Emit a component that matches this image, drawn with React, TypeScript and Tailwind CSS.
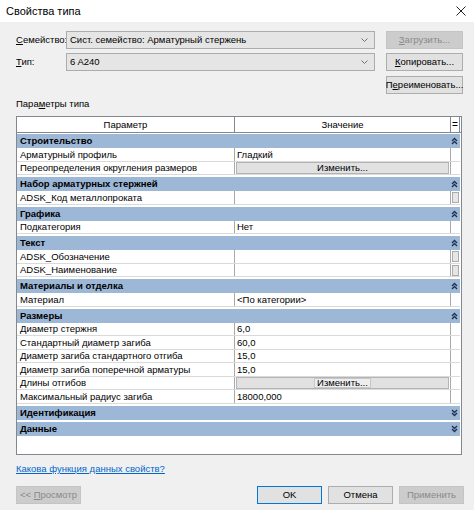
import React from 'react';

type Row =
  | { kind: 'group'; title: string; open: boolean }
  | { kind: 'data'; name: string; value?: string; button?: boolean; focus?: boolean; shared?: boolean };

const rows: Row[] = [
  { kind: 'group', title: 'Строительство', open: true },
  { kind: 'data', name: 'Арматурный профиль', value: 'Гладкий' },
  { kind: 'data', name: 'Переопределения округления размеров', button: true },
  { kind: 'group', title: 'Набор арматурных стержней', open: true },
  { kind: 'data', name: 'ADSK_Код металлопроката', shared: true },
  { kind: 'group', title: 'Графика', open: true },
  { kind: 'data', name: 'Подкатегория', value: 'Нет' },
  { kind: 'group', title: 'Текст', open: true },
  { kind: 'data', name: 'ADSK_Обозначение', shared: true },
  { kind: 'data', name: 'ADSK_Наименование', shared: true },
  { kind: 'group', title: 'Материалы и отделка', open: true },
  { kind: 'data', name: 'Материал', value: '<По категории>' },
  { kind: 'group', title: 'Размеры', open: true },
  { kind: 'data', name: 'Диаметр стержня', value: '6,0' },
  { kind: 'data', name: 'Стандартный диаметр загиба', value: '60,0' },
  { kind: 'data', name: 'Диаметр загиба стандартного отгиба', value: '15,0' },
  { kind: 'data', name: 'Диаметр загиба поперечной арматуры', value: '15,0' },
  { kind: 'data', name: 'Длины отгибов', button: true, focus: true },
  { kind: 'data', name: 'Максимальный радиус загиба', value: '18000,000' },
  { kind: 'group', title: 'Идентификация', open: false },
  { kind: 'group', title: 'Данные', open: false },
];

function Chevrons({ up }: { up: boolean }) {
  return (
    <svg width="7" height="8" viewBox="0 0 7 8" className="text-[#1e2f4e]">
      {up ? (
        <g fill="none" stroke="currentColor" strokeWidth="1.3">
          <path d="M1 4 L3.5 1.5 L6 4" />
          <path d="M1 7 L3.5 4.5 L6 7" />
        </g>
      ) : (
        <g fill="none" stroke="currentColor" strokeWidth="1.3">
          <path d="M1 1 L3.5 3.5 L6 1" />
          <path d="M1 4 L3.5 6.5 L6 4" />
        </g>
      )}
    </svg>
  );
}

function ComboArrow() {
  return (
    <svg width="7" height="4" viewBox="0 0 7 4" className="text-[#707070]">
      <path d="M0.5 0.5 L3.5 3.5 L6.5 0.5" fill="none" stroke="currentColor" strokeWidth="1" />
    </svg>
  );
}

function Combo({ text }: { text: string }) {
  return (
    <div className="w-[309px] h-[18px] flex items-center justify-between bg-[#e5e5e5] border border-[#acacac] pl-[3px] pr-[6px]">
      <span>{text}</span>
      <ComboArrow />
    </div>
  );
}

function WinButton({
  children,
  disabled,
  focused,
  className,
}: {
  children: React.ReactNode;
  disabled?: boolean;
  focused?: boolean;
  className?: string;
}) {
  const base = disabled
    ? 'bg-[#cccccc] border-[#c4c4c4] text-[#8a8a8a]'
    : focused
    ? 'bg-[#e1e1e1] border-[#0078d7] text-black'
    : 'bg-[#e1e1e1] border-[#adadad] text-black';
  return (
    <div className={`h-[18px] flex items-center justify-center border whitespace-nowrap ${base} ${className ?? ''}`}>
      {children}
    </div>
  );
}

function PropertyTable() {
  let dataIndex = 0;
  return (
    <div className="w-[446px] h-[339px] mt-[6px] border border-[#828790] bg-white flex flex-col">
      <div className="flex h-[16px] border-b border-[#828790] shrink-0">
        <div className="w-[218px] flex items-center justify-center border-r border-[#828790]">Параметр</div>
        <div className="w-[216px] flex items-center justify-center border-r border-[#828790]">Значение</div>
        <div className="w-[9px] flex items-center justify-center border-r border-[#828790] text-[10px]">=</div>
      </div>
      <div className="flex flex-col pt-[1px]">
        {rows.map((r, i) => {
          if (r.kind === 'group') {
            const first = i === 0;
            return (
              <div
                key={i}
                className={`h-[14px] w-[443px] flex items-center justify-between bg-[#9db7d7] font-bold pl-[3px] pr-[2px] shrink-0 ${first ? '' : 'mt-[2px]'}`}
              >
                <span>{r.title}</span>
                <Chevrons up={r.open} />
              </div>
            );
          }
          const tall = dataIndex++ % 2 === 0;
          return (
            <div key={i} className={`${tall ? 'h-[14px]' : 'h-[13px]'} w-[443px] flex border-b border-[#dadada] shrink-0`}>
              <div className="w-[218px] pl-[3px] flex items-center border-r border-[#a9a9a9] whitespace-nowrap overflow-hidden">
                {r.name}
              </div>
              <div className="w-[216px] flex items-center border-r border-[#a9a9a9]">
                {r.button ? (
                  <div className="w-full h-full flex items-center justify-center bg-[#e1e1e1] border border-[#b4b4b4] mx-[1px]">
                    <span className={r.focus ? 'px-[2px] h-[10px] flex items-center bg-[#ededed] border border-[#c8c8c8]' : ''}>
                      Изменить...
                    </span>
                  </div>
                ) : (
                  <span className="pl-[2px]">{r.value}</span>
                )}
              </div>
              <div className="w-[9px] flex items-center justify-center">
                {r.shared && <div className="w-[7px] h-[11px] bg-[#e6e6e6] border border-[#ababab]" />}
              </div>
            </div>
          );
        })}
      </div>
    </div>
  );
}

export default function App() {
  return (
    <div className="w-[474px] h-[515px] bg-white text-[9.5px] leading-none text-black font-['Liberation_Sans',Arial,sans-serif] flex flex-col overflow-hidden">
      <div className="h-[22px] flex items-center justify-between pl-[6px] pr-[8px] text-[11px] shrink-0">
        <span>Свойства типа</span>
        <svg width="10" height="10" viewBox="0 0 10 10">
          <path d="M0.5 0.5 L9.5 9.5 M9.5 0.5 L0.5 9.5" stroke="#222" strokeWidth="1" />
        </svg>
      </div>

      <div className="h-[488px] bg-[#f0f0f0] pl-[16px] pt-[9px] flex flex-col shrink-0">
        <div className="flex items-center">
          <div className="w-[50px]">
            <span className="underline">С</span>емейство:
          </div>
          <Combo text="Сист. семейство: Арматурный стержень" />
          <WinButton disabled className="w-[77px] ml-[11px]">
            <span className="underline">З</span>агрузить...
          </WinButton>
        </div>

        <div className="flex items-center mt-[4px]">
          <div className="w-[50px]">
            <span className="underline">Т</span>ип:
          </div>
          <Combo text="6 A240" />
          <WinButton className="w-[77px] ml-[11px]">
            <span className="underline">К</span>опировать...
          </WinButton>
        </div>

        <div className="flex mt-[5px]">
          <WinButton className="w-[77px] ml-[370px]">
            П<span className="underline">е</span>реименовать...
          </WinButton>
        </div>

        <div className="mt-[4px] h-[12px] flex items-center">
          Пара<span className="underline">м</span>етры типа
        </div>

        <PropertyTable />

        <div className="mt-[8px] h-[12px] flex items-center">
          <span className="text-[#0066cc] underline">Какова функция данных свойств?</span>
        </div>

        <div className="flex mt-[11px] h-[18px]">
          <WinButton disabled className="w-[65px] h-[17px]">
            &lt;&lt;&nbsp;<span className="underline">П</span>росмотр
          </WinButton>
          <WinButton focused className="w-[65px] h-[17px] ml-[176px]">OK</WinButton>
          <WinButton className="w-[65px] h-[17px] ml-[6px]">Отмена</WinButton>
          <WinButton disabled className="w-[65px] h-[17px] ml-[6px]">Применить</WinButton>
        </div>
      </div>
    </div>
  );
}
